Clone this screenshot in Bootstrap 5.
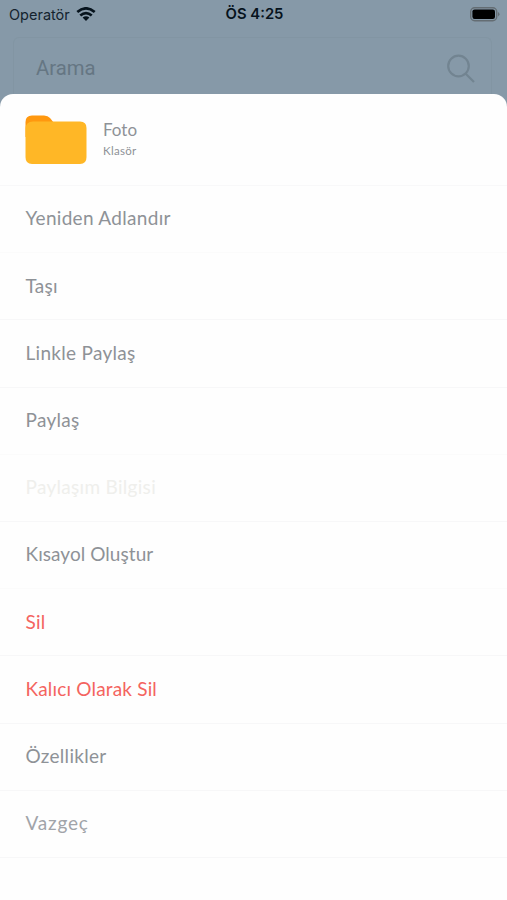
<!DOCTYPE html>
<html lang="tr">
<head>
<meta charset="utf-8">
<meta name="viewport" content="width=device-width, initial-scale=1">
<title>Foto</title>
<link href="https://cdn.jsdelivr.net/npm/bootstrap@5.3.0/dist/css/bootstrap.min.css" rel="stylesheet">
<style>
body{background:#8699a8;font-family:Lato,"Open Sans",sans-serif;height:900px;overflow:hidden}
.status{height:37px;padding:1px 7px 9px 9px;font-family:Inter,sans-serif;font-size:14.5px;line-height:27px;color:#14232e}
.status>*{flex:1 1 0}
.status .carrier{gap:6px}
.status svg{margin-top:-1px}
.clock{font-weight:600;font-size:14.8px;color:#06131d}
.search{height:57px;margin:0 15px 0 13px;padding:4px 16px 0 22px;border:1px solid #8295a3;border-bottom:0;border-radius:6px 6px 0 0;color:#657683;font-family:Roboto,sans-serif;font-size:20.3px}
.sheet{height:806px;border-radius:13px 13px 0 0;background:#fefefe}
.head{height:92px;padding-left:25px;border-bottom:1px solid #f8f8f9;color:#8e9297}
.head-name{font-size:17px;line-height:22px}
.head-kind{font-size:11.5px;line-height:20px;letter-spacing:.3px}
.actions{--bs-list-group-bg:transparent;--bs-list-group-border-color:#f7f7f8}
.actions .list-group-item{height:67.2px;padding:0 25px 1.4px 25.5px;color:#8e9297;font-size:19px;line-height:24px;letter-spacing:.3px;border-width:0 0 1px}
.actions .list-group-item:last-child{border-bottom-width:1px}
.actions .faint{border-color:#fbfbfb}
.actions .tight{letter-spacing:.06px}
.actions .off{color:#efefec}
.actions .del{color:#f4645f;letter-spacing:.18px}
.actions .cancel{color:#a1a4a9;letter-spacing:.8px}
</style>
<script src="https://cdn.jsdelivr.net/npm/bootstrap@5.3.0/dist/js/bootstrap.bundle.min.js"></script>
</head>
<body>
<header class="status d-flex">
  <div class="carrier d-flex align-items-center"><span>Operatör</span>
    <svg width="20" height="15" viewBox="0 0 20 15" fill="none" stroke="#06131d" stroke-width="2.7"><path d="M1.3 5.1Q10-2.4 18.7 5.1M4.3 8.5Q10 3.6 15.7 8.5"/><path d="M6.6 10.6Q10 7.8 13.4 10.6L10 14Z" fill="#06131d" stroke="none"/></svg>
  </div>
  <div class="clock text-center">ÖS 4:25</div>
  <div class="d-flex align-items-center justify-content-end">
    <svg width="30" height="15" viewBox="0 0 30 15"><rect x=".7" y=".7" width="26" height="13" rx="4" fill="#8699a8" stroke="#646d73" stroke-width="1.4"/><rect x="2.4" y="2.4" width="22.6" height="9.6" rx="2.2"/><path d="M28 5Q31 7.2 28 9.4Z" fill="#646d73"/></svg>
  </div>
</header>
<div class="search d-flex align-items-center justify-content-between">
  <span>Arama</span>
  <svg width="28" height="29" viewBox="0 0 28 29" fill="none" stroke="#728491" stroke-width="2.2"><circle cx="11.5" cy="12" r="10.3"/><path d="M18.5 19.5L27 28"/></svg>
</div>
<main class="sheet">
  <div class="head d-flex align-items-center">
    <svg width="62" height="50" viewBox="0 0 62 50"><path d="M.5 22V7Q.5 .5 7 .5H19Q23 .5 25 3L29 8L36 22Z" fill="#ff980f"/><path d="M.5 14Q.5 6.5 8 6.5H55Q61.5 6.5 61.5 13V42Q61.5 49 55 49H7Q.5 49 .5 42Z" fill="#ffb726"/></svg>
    <div class="ms-3"><div class="head-name">Foto</div><div class="head-kind">Klasör</div></div>
  </div>
  <div class="actions list-group list-group-flush">
    <a class="list-group-item d-flex align-items-center faint">Yeniden Adlandır</a>
    <a class="list-group-item d-flex align-items-center">Taşı</a>
    <a class="list-group-item d-flex align-items-center">Linkle Paylaş</a>
    <a class="list-group-item d-flex align-items-center faint">Paylaş</a>
    <a class="list-group-item d-flex align-items-center off">Paylaşım Bilgisi</a>
    <a class="list-group-item d-flex align-items-center faint tight">Kısayol Oluştur</a>
    <a class="list-group-item d-flex align-items-center del">Sil</a>
    <a class="list-group-item d-flex align-items-center del">Kalıcı Olarak Sil</a>
    <a class="list-group-item d-flex align-items-center">Özellikler</a>
    <a class="list-group-item d-flex align-items-center cancel">Vazgeç</a>
  </div>
</main>
</body>
</html>
